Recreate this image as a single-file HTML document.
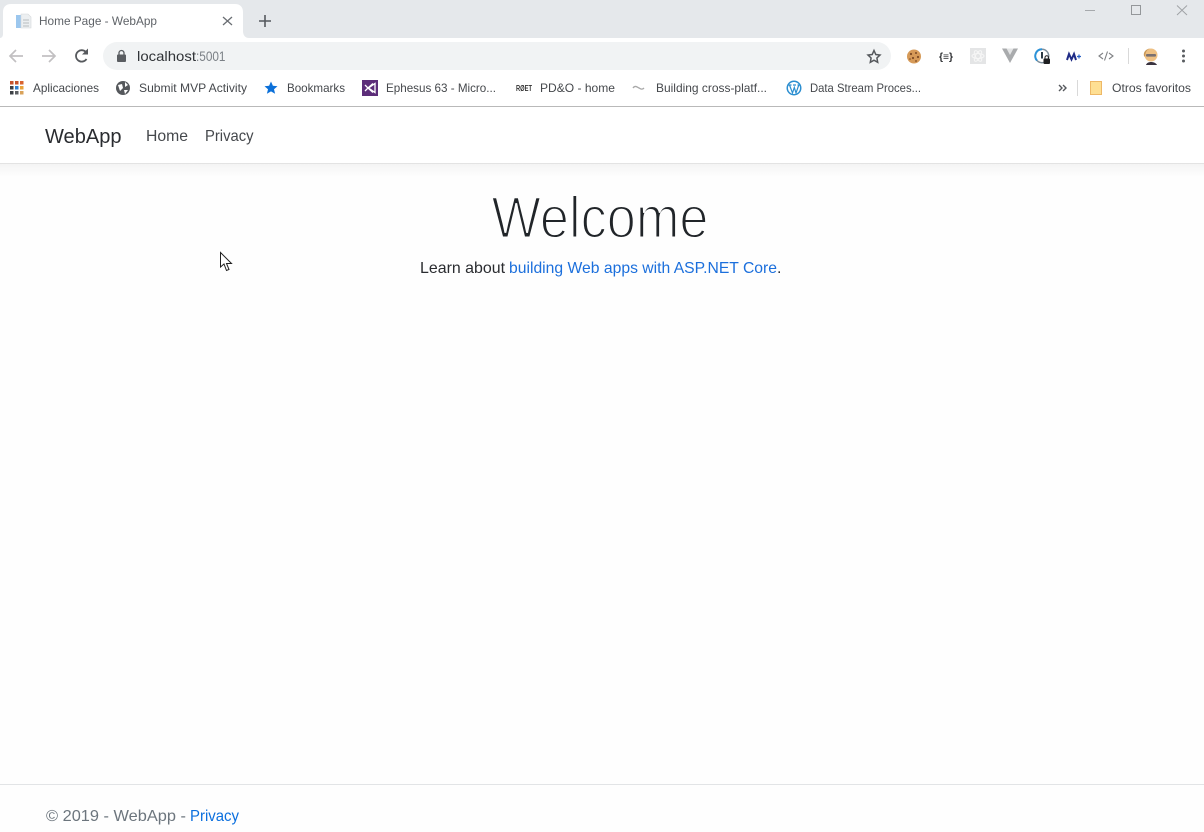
<!DOCTYPE html>
<html lang="en"><head><meta charset="utf-8"><title>Home Page - WebApp</title>
<style>
html,body{margin:0;padding:0;background:#fff;width:1204px;height:832px;overflow:hidden}
svg{display:block}
text{font-family:"Liberation Sans",sans-serif;white-space:pre}
.b{font-size:12px;fill:#45484c}
</style></head><body>
<svg width="1204" height="832" viewBox="0 0 1204 832" xmlns="http://www.w3.org/2000/svg">
<defs><linearGradient id="sh" x1="0" y1="0" x2="0" y2="1"><stop offset="0" stop-color="#f4f4f4"/><stop offset="1" stop-color="#fefefe"/></linearGradient></defs>
<rect width="1204" height="832" fill="#fefefe"/>
<!-- title bar -->
<rect width="1204" height="38" fill="#e5e8eb"/>
<path d="M0 38C2 38 3 36 3 34V12C3 7 6 4 11 4H235C240 4 243 7 243 12V31C243 35 245 38 249 38Z" fill="#fff"/>
<!-- favicon -->
<rect x="16" y="15" width="5" height="13" fill="#9cc7ee"/>
<path d="M21 14H28L31 17V28H21Z" fill="#eceff1" stroke="#d5d8da" stroke-width=".6"/>
<path d="M23 20H29M23 23H29M23 26H29" stroke="#b9bdc0"/>
<text x="39" y="25" font-size="12" fill="#5f6368" textLength="118" lengthAdjust="spacingAndGlyphs">Home Page - WebApp</text>
<path d="M223 17L232 25M232 17L223 25" stroke="#6a6e73" stroke-width="1.300" fill="none"/>
<path d="M265 15V27M259 21H271" stroke="#55595e" stroke-width="1.600" fill="none"/>
<!-- window controls -->
<path d="M1085 10.500H1095" stroke="#a6a9ac"/>
<rect x="1131.500" y="5.500" width="9" height="9" fill="none" stroke="#94979a"/>
<path d="M1177 5.500L1187 15M1187 5.500L1177 15" stroke="#a0a3a6" fill="none"/>
<!-- toolbar -->
<rect y="38" width="1204" height="32" fill="#fff"/>
<path d="M23 56H10M16 50L10 56L16 62" stroke="#c2c0c2" stroke-width="1.700" fill="none"/>
<path d="M42 56H55M49 50L55 56L49 62" stroke="#c2c0c2" stroke-width="1.700" fill="none"/>
<path d="M86.500 59A5.700 5.700 0 1 1 86.600 53" stroke="#56595d" stroke-width="1.800" fill="none"/>
<path d="M88 48.500V54.500H82Z" fill="#56595d"/>
<rect x="103" y="42" width="788" height="28" rx="14" fill="#f1f3f4"/>
<rect x="117" y="54.500" width="9" height="7.500" rx="1" fill="#5a5d61"/>
<path d="M119 55V53A2.500 2.500 0 0 1 124 53V55" stroke="#5a5d61" stroke-width="1.300" fill="none"/>
<text x="137" y="61" font-size="14" fill="#303337" textLength="59" lengthAdjust="spacingAndGlyphs">localhost</text>
<text x="196" y="61" font-size="14" fill="#7b8086" textLength="29.500" lengthAdjust="spacingAndGlyphs">:5001</text>
<path d="M874 50.500L875.800 54.500L880 55L876.900 58L877.700 62.300L874 60.200L870.300 62.300L871.100 58L868 55L872.200 54.500Z" fill="none" stroke="#55585c" stroke-width="1.500"/>
<!-- extensions -->
<circle cx="914" cy="56.500" r="7" fill="#d69a58"/>
<g fill="#7d4a24"><circle cx="911" cy="54" r="1.100"/><circle cx="916" cy="53" r="1"/><circle cx="918" cy="57" r="1.100"/><circle cx="913" cy="58" r="1.100"/><circle cx="916" cy="61" r=".9"/><circle cx="910" cy="59" r=".8"/></g>
<text x="939" y="60" font-size="10" font-weight="700" fill="#2e3033" textLength="14" lengthAdjust="spacingAndGlyphs">{≡}</text>
<rect x="970" y="48" width="16" height="16" fill="#e4e5e6"/>
<g fill="none" stroke="#f6f6f6"><ellipse cx="978" cy="56" rx="6" ry="2.500"/><ellipse cx="978" cy="56" rx="6" ry="2.500" transform="rotate(60 978 56)"/><ellipse cx="978" cy="56" rx="6" ry="2.500" transform="rotate(120 978 56)"/></g>
<path d="M1002 48.500H1018L1010 63Z" fill="#a9abad"/>
<path d="M1006.500 48.500H1013.500L1010 55Z" fill="#e3e4e5"/>
<circle cx="1042" cy="56" r="6.700" fill="#fff" stroke="#7f8f9b" stroke-width="1.500"/>
<path d="M1042 49.300A6.700 6.700 0 0 0 1037 60.500" fill="none" stroke="#2b92d8" stroke-width="2"/>
<rect x="1041" y="52" width="2" height="6.500" fill="#2b3a45"/>
<rect x="1043.500" y="58.500" width="6.500" height="5.500" rx="1" fill="#1e1f21"/>
<path d="M1045 59V57.500A1.700 1.700 0 0 1 1048.500 57.500V59" stroke="#1e1f21" fill="none"/>
<path d="M1067 60L1069 54L1071.500 59.500L1074 54L1076 60" stroke="#1f2b86" stroke-width="2" fill="none"/>
<path d="M1077 56.500H1081M1079 54.500V58.500" stroke="#2a62c4" stroke-width="1.200"/>
<path d="M1103 53L1099 56L1103 59M1109 53L1113 56L1109 59M1107.500 51.500L1104.500 60.500" stroke="#7f8184" stroke-width="1.100" fill="none"/>
<path d="M1128.500 48V64" stroke="#d9d9d9"/>
<ellipse cx="1151" cy="55" rx="6.500" ry="6.500" fill="#eec083"/>
<path d="M1144 56C1143 52 1146 49 1150 48.500C1146 50 1145.500 53 1145 57Z" fill="#c99858"/>
<rect x="1146" y="54" width="10" height="2.600" rx="1" fill="#7a7070"/>
<path d="M1146 65C1147 61 1155 61 1157 65Z" fill="#3a3340"/>
<circle cx="1183.500" cy="51" r="1.500" fill="#5a5d61"/><circle cx="1183.500" cy="56" r="1.500" fill="#5a5d61"/><circle cx="1183.500" cy="61" r="1.500" fill="#5a5d61"/>
<!-- bookmarks bar -->
<rect y="70" width="1204" height="36" fill="#fff"/>
<rect y="106" width="1204" height="1" fill="#b9b9b9"/>
<g>
<rect x="10" y="81" width="3.500" height="3.500" fill="#c4532d"/><rect x="15" y="81" width="3.500" height="3.500" fill="#c4532d"/><rect x="20" y="81" width="3.500" height="3.500" fill="#d8632f"/>
<rect x="10" y="86" width="3.500" height="3.500" fill="#3d4045"/><rect x="15" y="86" width="3.500" height="3.500" fill="#2e7fd0"/><rect x="20" y="86" width="3.500" height="3.500" fill="#e9a33a"/>
<rect x="10" y="91" width="3.500" height="3.500" fill="#3d4045"/><rect x="15" y="91" width="3.500" height="3.500" fill="#5a5d61"/><rect x="20" y="91" width="3.500" height="3.500" fill="#d9a25a"/>
</g>
<text class="b" x="33" y="92" textLength="66" lengthAdjust="spacingAndGlyphs">Aplicaciones</text>
<circle cx="123" cy="88" r="7" fill="#55585c"/>
<path d="M118 85L122 84L123 88L120 91ZM125 82L128 85L125 87ZM124 90L128 90L125 94Z" fill="#fff"/>
<text class="b" x="139" y="92" textLength="108" lengthAdjust="spacingAndGlyphs">Submit MVP Activity</text>
<path d="M271 81.500L272.900 85.800L277.500 86.200L274 89.200L275.100 93.800L271 91.400L266.900 93.800L268 89.200L264.500 86.200L269.100 85.800Z" fill="#0b70d9"/>
<text class="b" x="287" y="92" textLength="58" lengthAdjust="spacingAndGlyphs">Bookmarks</text>
<rect x="362" y="80" width="16" height="16" fill="#5c2d79"/>
<path d="M365 85L368 88L365 91M375 83.500V92.500L368.500 88Z M368 88L373 83.500M368 88L373 92.500" stroke="#fff" stroke-width="1.300" fill="none"/>
<text class="b" x="386" y="92" textLength="110" lengthAdjust="spacingAndGlyphs">Ephesus 63 - Micro...</text>
<text x="516" y="91" font-size="8" font-weight="700" fill="#333" textLength="16" lengthAdjust="spacingAndGlyphs">RØET</text>
<text class="b" x="540" y="92" textLength="75" lengthAdjust="spacingAndGlyphs">PD&amp;O - home</text>
<path d="M633 88C635 85 637 87 639 88S642 90 644 88" stroke="#a8a8a8" stroke-width="1.300" fill="none"/>
<text class="b" x="656" y="92" textLength="111" lengthAdjust="spacingAndGlyphs">Building cross-platf...</text>
<circle cx="794" cy="88" r="7.500" fill="#2b8ed0"/>
<circle cx="794" cy="88" r="6" fill="#fff"/>
<path d="M789.500 85L792.500 93L794.300 87.500L796 93L798.800 85M788.500 85H791.500M793 85H796M797.500 85H800" stroke="#2b8ed0" stroke-width="1.200" fill="none"/>
<text class="b" x="810" y="92" textLength="111" lengthAdjust="spacingAndGlyphs">Data Stream Proces...</text>
<path d="M1059 85L1062 88L1059 91M1063 85L1066 88L1063 91" stroke="#55585c" stroke-width="1.400" fill="none"/>
<path d="M1077.500 80V96" stroke="#d9d9d9"/>
<path d="M1090.500 81.500H1101.500V94.500H1090.500Z" fill="#fedf93" stroke="#eeb866"/>
<text class="b" x="1112" y="92" textLength="79" lengthAdjust="spacingAndGlyphs">Otros favoritos</text>
<!-- navbar -->
<rect y="107" width="1204" height="56" fill="#fff"/>
<rect y="163" width="1204" height="1" fill="#e3e3e3"/>
<rect y="164" width="1204" height="13" fill="url(#sh)"/>
<text x="45" y="143" font-size="20" fill="#2a2c30" textLength="76.500" lengthAdjust="spacingAndGlyphs">WebApp</text>
<text x="146" y="141" font-size="16" fill="#45484c" textLength="42" lengthAdjust="spacingAndGlyphs">Home</text>
<text x="205" y="141" font-size="16" fill="#45484c" textLength="48.500" lengthAdjust="spacingAndGlyphs">Privacy</text>
<!-- cursor -->
<path d="M220.500 252.500V267L224 264L226.500 270.500L229 269.500L226.500 263.500L231.500 263.500Z" fill="#fff" stroke="#222" stroke-width="1"/>
<!-- main -->
<text x="491.500" y="237.500" font-size="58" fill="#212529" stroke="#fefefe" stroke-width="2" textLength="217" lengthAdjust="spacingAndGlyphs">Welcome</text>
<text x="420" y="273" font-size="16" fill="#2a2c30" textLength="85" lengthAdjust="spacingAndGlyphs">Learn about</text>
<text x="509" y="273" font-size="16" fill="#1b6fdc" textLength="268" lengthAdjust="spacingAndGlyphs">building Web apps with ASP.NET Core</text>
<text x="777" y="273" font-size="16" fill="#2a2c30">.</text>
<!-- footer -->
<rect y="784" width="1204" height="1" fill="#e2e4e6"/>
<text x="46" y="821" font-size="16" fill="#6c757d" textLength="140" lengthAdjust="spacingAndGlyphs">© 2019 - WebApp -</text>
<text x="190" y="821" font-size="16" fill="#0b6fde" textLength="49" lengthAdjust="spacingAndGlyphs">Privacy</text>
</svg>
</body></html>
